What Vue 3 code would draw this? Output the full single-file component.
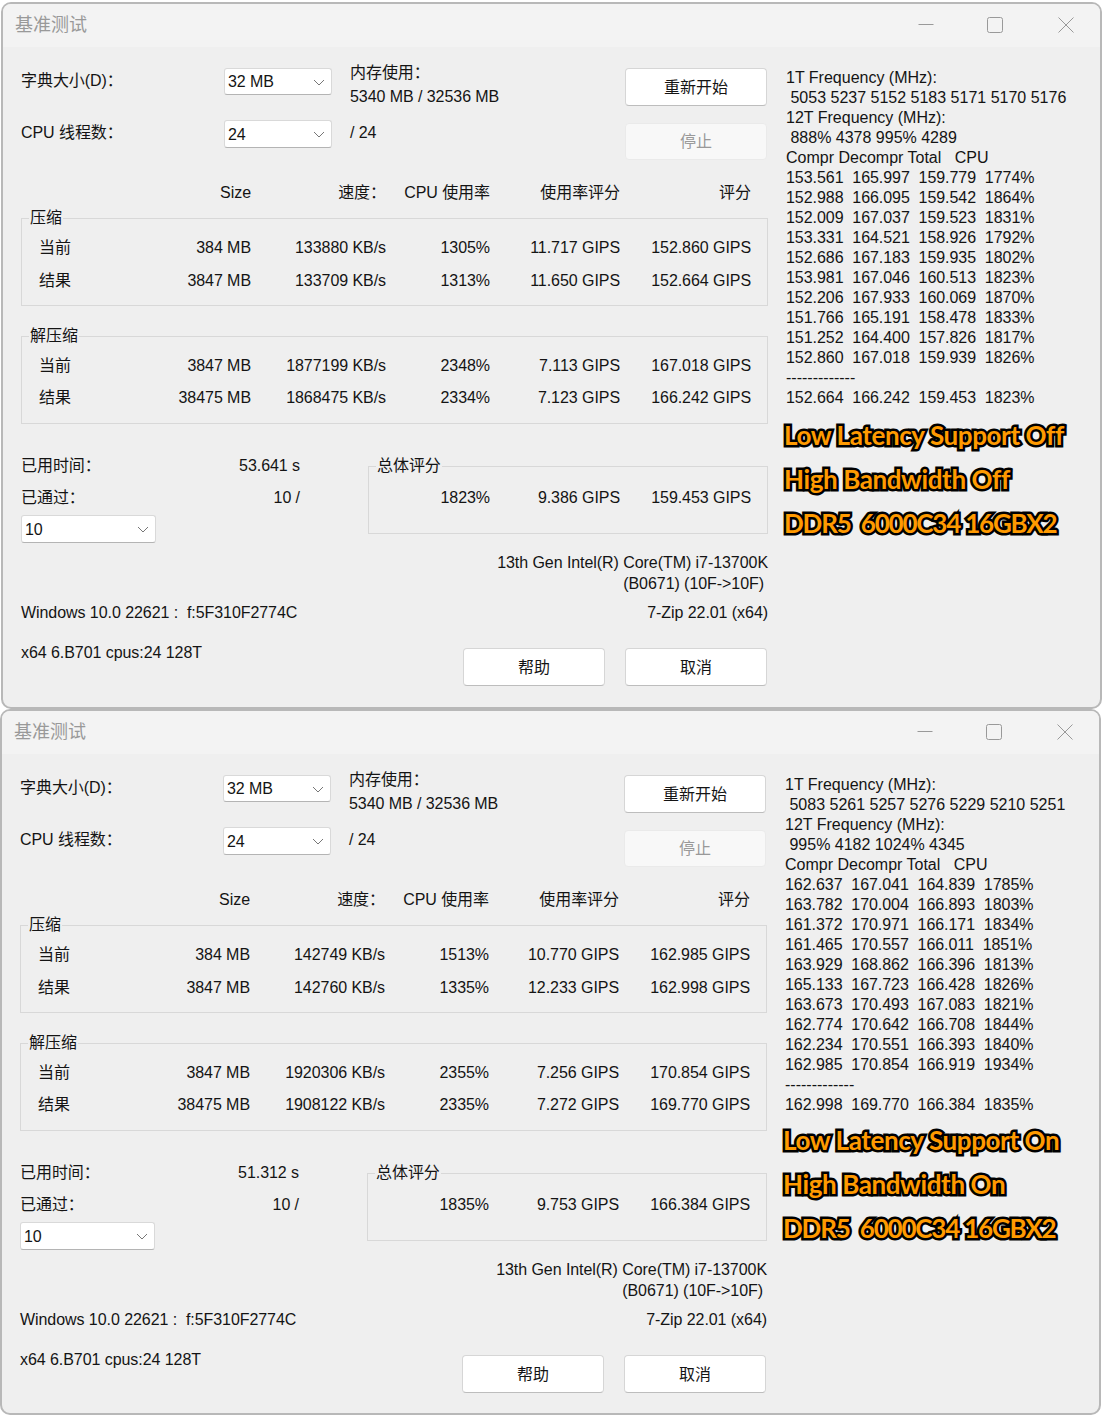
<script setup>
const windows = [
  {
    id: 'a',
    freq1: ' 5053 5237 5152 5183 5171 5170 5176',
    freq12: ' 888% 4378 995% 4289',
    log: [
      '153.561  165.997  159.779  1774%',
      '152.988  166.095  159.542  1864%',
      '152.009  167.037  159.523  1831%',
      '153.331  164.521  158.926  1792%',
      '152.686  167.183  159.935  1802%',
      '153.981  167.046  160.513  1823%',
      '152.206  167.933  160.069  1870%',
      '151.766  165.191  158.478  1833%',
      '151.252  164.400  157.826  1817%',
      '152.860  167.018  159.939  1826%',
    ],
    logTotal: '152.664  166.242  159.453  1823%',
    notes: ['Low Latency Support Off', 'High Bandwidth Off', 'DDR5  6000C34 16GBX2'],
    compress: [
      ['当前', '384 MB', '133880 KB/s', '1305%', '11.717 GIPS', '152.860 GIPS'],
      ['结果', '3847 MB', '133709 KB/s', '1313%', '11.650 GIPS', '152.664 GIPS'],
    ],
    decompress: [
      ['当前', '3847 MB', '1877199 KB/s', '2348%', '7.113 GIPS', '167.018 GIPS'],
      ['结果', '38475 MB', '1868475 KB/s', '2334%', '7.123 GIPS', '166.242 GIPS'],
    ],
    elapsed: '53.641 s',
    total: ['1823%', '9.386 GIPS', '159.453 GIPS'],
  },
  {
    id: 'b',
    freq1: ' 5083 5261 5257 5276 5229 5210 5251',
    freq12: ' 995% 4182 1024% 4345',
    log: [
      '162.637  167.041  164.839  1785%',
      '163.782  170.004  166.893  1803%',
      '161.372  170.971  166.171  1834%',
      '161.465  170.557  166.011  1851%',
      '163.929  168.862  166.396  1813%',
      '165.133  167.723  166.428  1826%',
      '163.673  170.493  167.083  1821%',
      '162.774  170.642  166.708  1844%',
      '162.234  170.551  166.393  1840%',
      '162.985  170.854  166.919  1934%',
    ],
    logTotal: '162.998  169.770  166.384  1835%',
    notes: ['Low Latency Support On', 'High Bandwidth On', 'DDR5  6000C34 16GBX2'],
    compress: [
      ['当前', '384 MB', '142749 KB/s', '1513%', '10.770 GIPS', '162.985 GIPS'],
      ['结果', '3847 MB', '142760 KB/s', '1335%', '12.233 GIPS', '162.998 GIPS'],
    ],
    decompress: [
      ['当前', '3847 MB', '1920306 KB/s', '2355%', '7.256 GIPS', '170.854 GIPS'],
      ['结果', '38475 MB', '1908122 KB/s', '2335%', '7.272 GIPS', '169.770 GIPS'],
    ],
    elapsed: '51.312 s',
    total: ['1835%', '9.753 GIPS', '166.384 GIPS'],
  },
]

// template whitespace gets condensed, so the padded header comes from here
const logHeader = 'Compr Decompr Total   CPU'
</script>

<template>
  <main class="page">
    <section v-for="win in windows" :key="win.id" class="window" :class="'window-' + win.id">
      <header class="titlebar">
        <span class="title">基准测试</span>
        <div class="controls">
          <span class="ctrl ctrl-min"><svg width="16" height="16" viewBox="0 0 16 16"><path d="M0.5 7.5h15" stroke="#999" fill="none"/></svg></span>
          <span class="ctrl"><svg width="16" height="16" viewBox="0 0 16 16"><rect x="0.5" y="0.5" width="15" height="15" rx="2" stroke="#999" fill="none"/></svg></span>
          <span class="ctrl"><svg width="16" height="16" viewBox="0 0 16 16"><path d="M0.5 0.5l15 15M15.5 0.5l-15 15" stroke="#999" fill="none"/></svg></span>
        </div>
      </header>

      <div class="body">
        <div class="left">
          <div class="top">
            <span class="label first">字典大小(D)：</span>
            <div class="combo first-combo">
              32 MB
              <svg class="chev" width="12" height="7" viewBox="0 0 12 7"><path d="M1 1l5 5 5-5" stroke="#777" fill="none"/></svg>
            </div>
            <div class="memory">
              <div>内存使用：</div>
              <div>5340 MB / 32536 MB</div>
            </div>
            <button class="btn restart">重新开始</button>

            <span class="label">CPU 线程数：</span>
            <div class="combo">
              24
              <svg class="chev" width="12" height="7" viewBox="0 0 12 7"><path d="M1 1l5 5 5-5" stroke="#777" fill="none"/></svg>
            </div>
            <span class="label">/ 24</span>
            <button class="btn stop">停止</button>
          </div>

          <div class="cols heading">
            <span></span>
            <span>Size</span>
            <span>速度：</span>
            <span>CPU 使用率</span>
            <span>使用率评分</span>
            <span>评分</span>
          </div>

          <fieldset class="group compress">
            <legend>压缩</legend>
            <div v-for="row in win.compress" :key="row[0]" class="cols">
              <span v-for="(cell, i) in row" :key="i">{{ cell }}</span>
            </div>
          </fieldset>

          <fieldset class="group decompress">
            <legend>解压缩</legend>
            <div v-for="row in win.decompress" :key="row[0]" class="cols">
              <span v-for="(cell, i) in row" :key="i">{{ cell }}</span>
            </div>
          </fieldset>

          <div class="summary">
            <div class="passes">
              <div class="pass-row"><span>已用时间：</span><span>{{ win.elapsed }}</span></div>
              <div class="pass-row"><span>已通过：</span><span>10 /</span></div>
              <div class="combo wide">
                10
                <svg class="chev" width="12" height="7" viewBox="0 0 12 7"><path d="M1 1l5 5 5-5" stroke="#777" fill="none"/></svg>
              </div>
            </div>
            <fieldset class="group total">
              <legend>总体评分</legend>
              <div class="total-row">
                <span v-for="cell in win.total" :key="cell">{{ cell }}</span>
              </div>
            </fieldset>
          </div>

          <div class="cpu">
            <div>13th Gen Intel(R) Core(TM) i7-13700K</div>
            <div class="cpu-id">(B0671) (10F-&gt;10F)</div>
          </div>

          <div class="sysline">
            <span>Windows 10.0 22621 :&nbsp; f:5F310F2774C</span>
            <span>7-Zip 22.01 (x64)</span>
          </div>

          <div class="footer">
            <span>x64 6.B701 cpus:24 128T</span>
            <div class="footer-btns">
              <button class="btn">帮助</button>
              <button class="btn">取消</button>
            </div>
          </div>
        </div>

        <aside class="side">
          <div class="log">
            <div>1T Frequency (MHz):</div>
            <div>{{ win.freq1 }}</div>
            <div>12T Frequency (MHz):</div>
            <div>{{ win.freq12 }}</div>
            <div>{{ logHeader }}</div>
            <div v-for="line in win.log" :key="line" class="log-row">{{ line }}</div>
            <div>-------------</div>
            <div class="log-row">{{ win.logTotal }}</div>
          </div>
          <div class="notes">
            <div v-for="note in win.notes" :key="note" class="note">{{ note }}</div>
          </div>
        </aside>
      </div>
    </section>
  </main>
</template>

<style>
html,
body {
  margin: 0;
  background: #fff;
}
</style>

<style scoped>
.page {
  width: 1102px;
  height: 1416px;
  overflow: hidden;
  padding-top: 2px;
  box-sizing: border-box;
  font-family: "Liberation Sans", "Noto Sans CJK SC", sans-serif;
  font-size: 16px;
  line-height: 20px;
  color: #141414;
}

.window {
  box-sizing: border-box;
  width: 1101px;
  height: 707px;
  margin-left: 1px;
  border: 2px solid #b8b8b8;
  border-radius: 10px;
  background: #efefef;
  overflow: hidden;
}

.window-b {
  margin-left: 0;
  height: 706px;
}

.titlebar {
  box-sizing: border-box;
  display: flex;
  justify-content: space-between;
  align-items: center;
  height: 43px;
  padding-bottom: 2px;
  background: #f3f3f3;
}

.title {
  margin-left: 12px;
  font-size: 18px;
  color: #999;
}

.controls {
  display: flex;
  margin-right: -1px;
}

.ctrl {
  width: 71px;
  display: flex;
  justify-content: center;
}

.ctrl-min {
  width: 67px;
}

.body {
  display: flex;
  padding: 15px 0 0 18px;
}

.left {
  width: 747px;
  flex: none;
  letter-spacing: -0.06px;
}

.top {
  display: grid;
  grid-template-columns: 203px 126px 275px 142px;
  grid-template-rows: 58px 63px;
  align-items: start;
}

.label {
  margin-top: 3px;
}

.label.first {
  margin-top: 9px;
}

.combo {
  box-sizing: border-box;
  position: relative;
  width: 108px;
  height: 28px;
  line-height: 27px;
  padding-left: 3px;
  background: #fff;
  border: 1px solid #d9d9d9;
  border-bottom-color: #b4b4b4;
  border-radius: 3px;
}

.first-combo {
  margin-top: 6px;
  height: 27px;
  line-height: 25px;
}

.chev {
  position: absolute;
  right: 6px;
  top: 10px;
}

.memory {
  margin-top: 1px;
}

.memory div + div {
  margin-top: 4px;
}

.btn {
  box-sizing: border-box;
  width: 142px;
  height: 38px;
  padding: 0;
  font: inherit;
  letter-spacing: 0;
  color: #141414;
  background: #fff;
  border: 1px solid #d6d6d6;
  border-bottom-color: #bdbdbd;
  border-radius: 4px;
}

.restart {
  margin-top: 6px;
  padding-top: 1px;
}

.stop {
  margin-top: 3px;
  height: 37px;
  color: #999;
  background: #f8f8f8;
  border-color: #eaeaea;
}

.cols {
  display: grid;
  grid-template-columns: 131px 81px 135px 104px 130px 131px;
  text-align: right;
}

.cols > span:first-child {
  text-align: left;
}

.heading {
  padding-left: 18px;
}

.group {
  margin: 0;
  padding: 0;
  border: 1px solid #d8d8d8;
  min-width: 0;
}

.group legend {
  margin-left: 7px;
  padding: 0 1px;
  line-height: 20px;
}

.group .cols {
  padding-left: 17px;
}

.compress {
  margin-top: 5px;
  padding: 10px 0 14px;
}

.compress .cols + .cols {
  margin-top: 13px;
}

.decompress {
  margin-top: 20px;
  padding: 10px 0 15px;
}

.decompress .cols + .cols {
  margin-top: 12px;
}

.summary {
  display: flex;
  margin-top: 32px;
}

.passes {
  width: 347px;
  flex: none;
}

.pass-row {
  display: flex;
  justify-content: space-between;
  width: 279px;
  margin-bottom: 12px;
}

.pass-row + .pass-row {
  margin-bottom: 7px;
}

.combo.wide {
  width: 135px;
}

.total {
  width: 400px;
  box-sizing: border-box;
  align-self: flex-start;
  padding: 12px 0 25px;
}

.total-row {
  display: grid;
  grid-template-columns: 121px 130px 131px;
  text-align: right;
}

.cpu {
  margin-top: 10px;
  text-align: right;
}

.cpu-id {
  margin-top: 1px;
  padding-right: 4px;
}

.sysline {
  display: flex;
  justify-content: space-between;
  margin-top: 9px;
}

.footer {
  display: flex;
  justify-content: space-between;
  margin-top: 20px;
}

.footer-btns {
  display: flex;
  gap: 20px;
  margin-top: 5px;
  margin-right: 1px;
}

.footer-btns .btn {
  padding-top: 1px;
}

.side {
  margin-left: 18px;
  margin-top: 6px;
}

.log {
  white-space: pre;
}

.log-row {
  letter-spacing: -0.05px;
}

.notes {
  margin-top: 5px;
  margin-left: -2px;
}

.window-b .notes {
  margin-top: 3px;
}

.note {
  height: 44px;
  line-height: 44px;
  white-space: pre;
  font-family: "Lato", sans-serif;
  font-weight: 700;
  font-size: 26px;
  letter-spacing: -0.4px;
  color: #ff9a00;
  -webkit-text-stroke: 5px #000;
  paint-order: stroke fill;
}

/* digits run wide in this font */
.note:last-child {
  letter-spacing: -1.2px;
}
</style>
